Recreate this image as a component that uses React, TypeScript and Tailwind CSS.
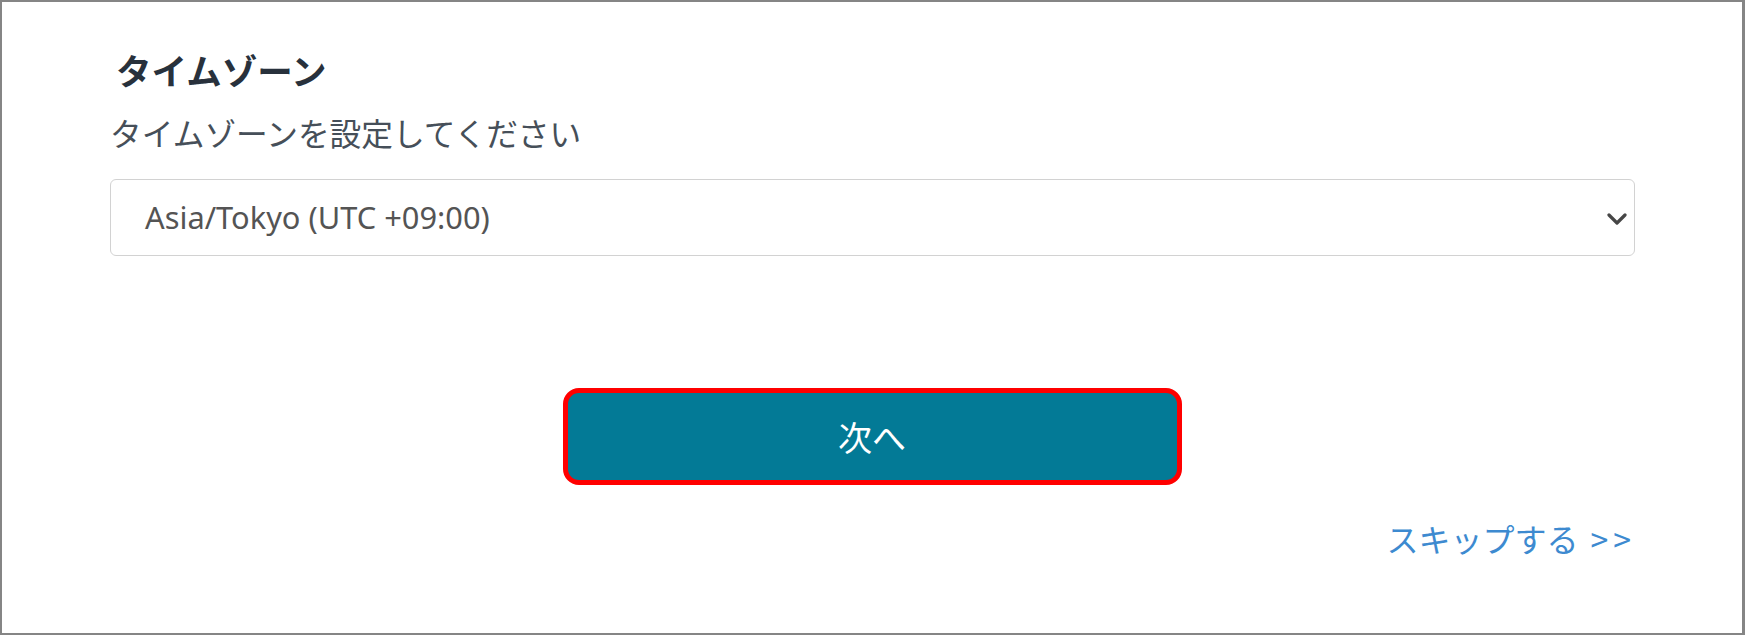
import React from "react";

const jp = { fontFamily: '"Noto Sans CJK JP", "Noto Sans", sans-serif' };

export default function App() {
  return (
    <div
      className="w-[1745px] h-[635px] bg-white border-2 border-r-[3px] border-[#858585] box-border flex flex-col"
      style={jp}
    >
      <div className="pl-[108px] pr-[107px] flex flex-col">
        <h1 className="mt-[48px] ml-[6px] text-[35.5px] leading-[40px] font-bold text-[#28313c]">
          タイムゾーン
        </h1>
        <p className="mt-[22px] text-[31.7px] leading-[40px] text-[#464f59]">
          タイムゾーンを設定してください
        </p>
        <div className="mt-[27px] h-[77px] border border-[#d2d2d2] rounded-[6px] flex items-center justify-between pl-[34px] pr-[7px]">
          <span
            className="text-[30.8px] text-[#545454] leading-none"
            style={{ fontFamily: '"Noto Sans", "Liberation Sans", sans-serif' }}
          >
            Asia/Tokyo (UTC +09:00)
          </span>
          <svg width="20" height="12" viewBox="0 0 20 12" className="mt-[2px]">
            <path d="M2 2 L10 10 L18 2" fill="none" stroke="#464646" strokeWidth="3.2" strokeLinecap="round" strokeLinejoin="round" />
          </svg>
        </div>
      </div>
      <div className="mt-[132px] flex justify-center">
        <button className="w-[619px] h-[97px] rounded-[16px] border-[5px] border-[#ff0000] bg-[#037a96] flex items-center justify-center">
          <span className="text-[34px] text-white leading-none">次へ</span>
        </button>
      </div>
      <div className="flex justify-end pr-[106px] mt-[37px]">
        <span className="text-[32px] text-[#3d8ad0] leading-none whitespace-pre flex items-baseline">
          <span>スキップする</span>
          <span className="ml-[12px] tracking-[5px]">&gt;&gt;</span>
        </span>
      </div>
    </div>
  );
}
